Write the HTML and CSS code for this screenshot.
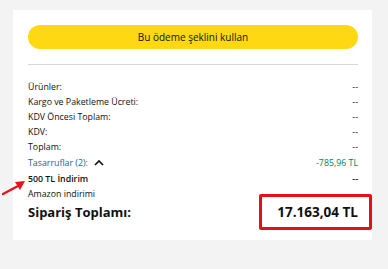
FILE: index.html
```html
<!DOCTYPE html>
<html lang="tr">

<head>
    <meta charset="UTF-8">
    <meta name="viewport" content="width=device-width, initial-scale=1.0">
    <title>Sipariş Özeti</title>
    <link rel="stylesheet" href="styles.css">
</head>

<body>
    <div class="kart">
        <button class="boton">Bu ödeme şeklini kullan</button>
        <hr class="linea">

        <div class="fila"><span>Ürünler:</span><span>--</span></div>
        <div class="fila"><span>Kargo ve Paketleme Ücreti:</span><span>--</span></div>
        <div class="fila"><span>KDV Öncesi Toplam:</span><span>--</span></div>
        <div class="fila"><span>KDV:</span><span>--</span></div>
        <div class="fila"><span>Toplam:</span><span>--</span></div>
        <div class="fila ahorro">
            <span class="enlace">Tasarruflar (2):
                <svg class="flecha-arriba" width="10" height="7" viewBox="0 0 10 7">
                    <path d="M1 6 L5 2 L9 6" fill="none" stroke="#111" stroke-width="1.7"/>
                </svg>
            </span>
            <span class="verde">-785,96 TL</span>
        </div>
        <div class="fila destacado"><span>500 TL İndirim</span><span>--</span></div>
        <div class="fila"><span>Amazon indirimi</span><span>--</span></div>

        <div class="total">
            <span>Sipariş Toplamı:</span>
            <span class="caja-roja">17.163,04 TL</span>
        </div>
    </div>

    <svg class="flecha-roja" width="26" height="16" viewBox="0 0 26 16">
        <path d="M1 14 L16 6" stroke="#e8141c" stroke-width="2.4" stroke-linecap="round"/>
        <path d="M13 2 L23 1 L18 10 Z" fill="#e8141c"/>
    </svg>
</body>

</html>
```

FILE: styles.css
```css
* {
    margin: 0;
    box-sizing: border-box;
}

body {
    background-color: #f3f3f3;
    padding: 10px 16px 0 13px;
    font-family: 'Open Sans', 'Noto Sans', sans-serif;
    color: #0f1111;
    position: relative;
}

.kart {
    background-color: white;
    width: 359px;
    padding: 15px 14px 10px 15px;
}

.boton {
    display: block;
    width: 100%;
    height: 24px;
    border: none;
    border-radius: 12px;
    background-color: #ffd814;
    font-family: 'Open Sans', 'Noto Sans', sans-serif;
    font-size: 10px;
    color: #0f1111;
}

.linea {
    border: none;
    border-top: 1px solid #d5d9d9;
    margin: 15px 0 14px;
}

.fila {
    display: flex;
    justify-content: space-between;
    align-items: center;
    height: 15px;
    font-size: 8.8px;
}

.ahorro {
    height: 17px;
}

.enlace {
    color: #2162a1;
    display: flex;
    align-items: center;
    gap: 6px;
}

.verde {
    color: #067d62;
}

.destacado {
    font-weight: 600;
}

.total {
    display: flex;
    justify-content: space-between;
    align-items: center;
    font-size: 13px;
    font-weight: bold;
    margin-top: -7px;
}

.caja-roja {
    border: 3px solid #e3101a;
    border-radius: 2px;
    width: 113px;
    height: 36px;
    margin-right: -14px;
    padding-right: 11px;
    font-size: 13.5px;
    display: flex;
    align-items: center;
    justify-content: flex-end;
}

.flecha-roja {
    position: absolute;
    left: 2px;
    top: 180px;
}
```
